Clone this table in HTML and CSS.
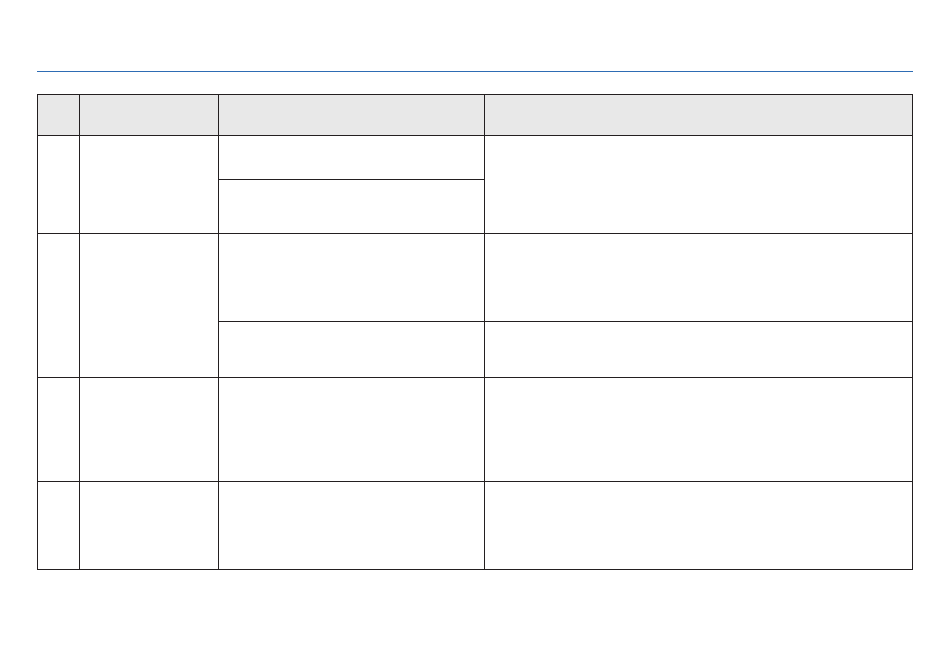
FILE: index.html
```html
<!DOCTYPE html>
<html>
<head>
<meta charset="utf-8">
<link rel="stylesheet" href="styles.css">
</head>
<body>
<div class="page">
  <div class="rule"></div>
  <table class="grid">
    <colgroup>
      <col class="c1"><col class="c2"><col class="c3"><col class="c4">
    </colgroup>
    <thead>
      <tr class="h"><th></th><th></th><th></th><th></th></tr>
    </thead>
    <tbody>
      <tr class="r1"><td rowspan="2"></td><td rowspan="2"></td><td></td><td rowspan="2"></td></tr>
      <tr class="r2"><td></td></tr>
      <tr class="r3"><td rowspan="2"></td><td rowspan="2"></td><td></td><td></td></tr>
      <tr class="r4"><td></td><td></td></tr>
      <tr class="r5"><td></td><td></td><td></td><td></td></tr>
      <tr class="r6"><td></td><td></td><td></td><td></td></tr>
    </tbody>
  </table>
</div>
</body>
</html>
```

FILE: styles.css
```css
html, body {
  margin: 0;
  padding: 0;
  background: #ffffff;
  font-family: "Liberation Sans", Arial, sans-serif;
}
.page {
  padding: 71px 0 0 37px;
}
.rule {
  width: 876px;
  height: 1px;
  background: #2e6cb4;
  margin-bottom: 22px;
}
.grid {
  border-collapse: collapse;
  table-layout: fixed;
  width: 876px;
}
.grid th, .grid td {
  border: 1px solid #231f20;
  padding: 0;
}
.grid th {
  background: #e8e8e8;
}
.c1 { width: 42px; }
.c2 { width: 139px; }
.c3 { width: 266px; }
.c4 { width: 428px; }
.h { height: 41px; }
.r1 { height: 44px; }
.r2 { height: 54px; }
.r3 { height: 88px; }
.r4 { height: 56px; }
.r5 { height: 104px; }
.r6 { height: 88px; }
```
